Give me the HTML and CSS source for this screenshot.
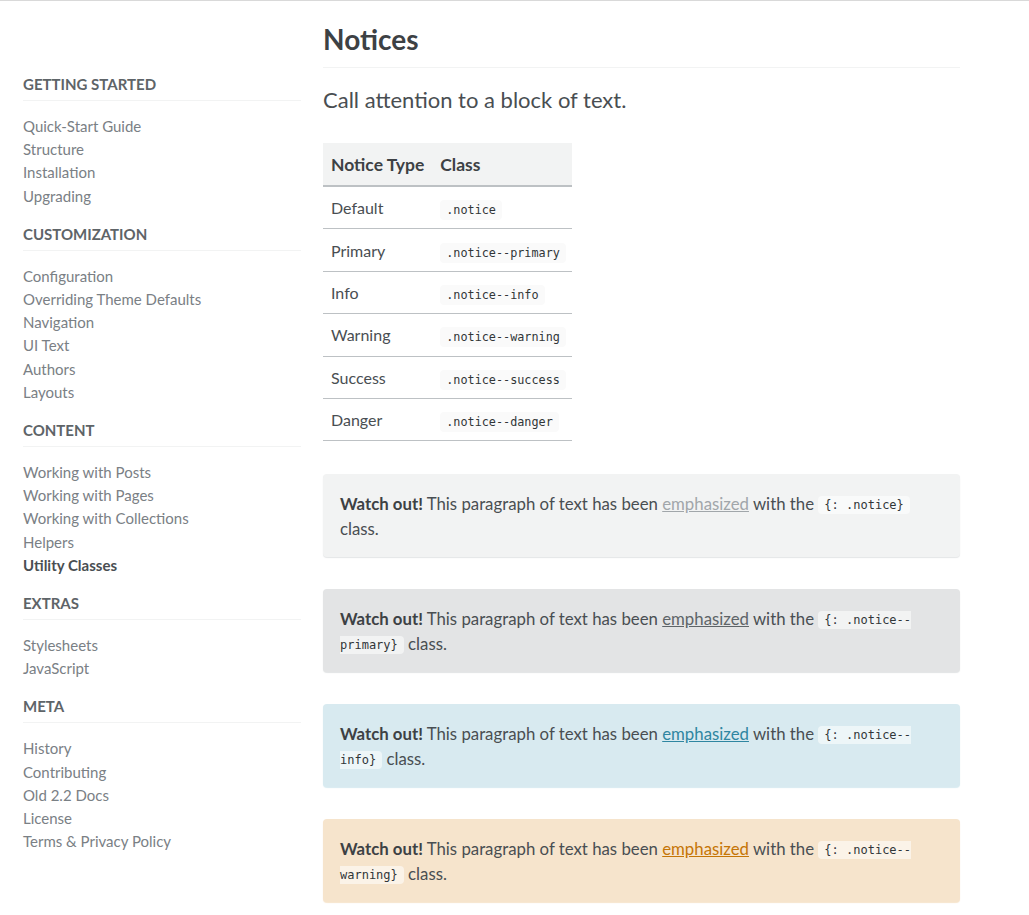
FILE: index.html
```html
<!DOCTYPE html>
<html lang="en">
<head>
<meta charset="utf-8">
<title>Notices</title>
<link rel="stylesheet" href="styles.css">
</head>
<body>
<div class="topline"></div>
<div class="layout">
  <nav class="sidebar">
    <h3 class="nav-title">Getting Started</h3>
    <ul class="nav-list">
      <li>Quick-Start Guide</li>
      <li>Structure</li>
      <li>Installation</li>
      <li>Upgrading</li>
    </ul>
    <h3 class="nav-title">Customization</h3>
    <ul class="nav-list">
      <li>Configuration</li>
      <li>Overriding Theme Defaults</li>
      <li>Navigation</li>
      <li>UI Text</li>
      <li>Authors</li>
      <li>Layouts</li>
    </ul>
    <h3 class="nav-title">Content</h3>
    <ul class="nav-list">
      <li>Working with Posts</li>
      <li>Working with Pages</li>
      <li>Working with Collections</li>
      <li>Helpers</li>
      <li class="active">Utility Classes</li>
    </ul>
    <h3 class="nav-title">Extras</h3>
    <ul class="nav-list">
      <li>Stylesheets</li>
      <li>JavaScript</li>
    </ul>
    <h3 class="nav-title">Meta</h3>
    <ul class="nav-list">
      <li>History</li>
      <li>Contributing</li>
      <li>Old 2.2 Docs</li>
      <li>License</li>
      <li>Terms &amp; Privacy Policy</li>
    </ul>
  </nav>
  <main class="content">
    <h1 class="title">Notices</h1>
    <p class="lead">Call attention to a block of text.</p>
    <table class="types">
      <thead>
        <tr><th>Notice Type</th><th>Class</th></tr>
      </thead>
      <tbody>
        <tr><td>Default</td><td><code>.notice</code></td></tr>
        <tr><td>Primary</td><td><code>.notice--primary</code></td></tr>
        <tr><td>Info</td><td><code>.notice--info</code></td></tr>
        <tr><td>Warning</td><td><code>.notice--warning</code></td></tr>
        <tr><td>Success</td><td><code>.notice--success</code></td></tr>
        <tr><td>Danger</td><td><code>.notice--danger</code></td></tr>
      </tbody>
    </table>
    <p class="notice notice-default"><strong>Watch out!</strong> This paragraph of text has been <a href="#">emphasized</a> with the <code>{: .notice}</code> class.</p>
    <p class="notice notice-primary"><strong>Watch out!</strong> This paragraph of text has been <a href="#">emphasized</a> with the <code>{: .notice--primary}</code> class.</p>
    <p class="notice notice-info"><strong>Watch out!</strong> This paragraph of text has been <a href="#">emphasized</a> with the <code>{: .notice--info}</code> class.</p>
    <p class="notice notice-warning"><strong>Watch out!</strong> This paragraph of text has been <a href="#">emphasized</a> with the <code>{: .notice--warning}</code> class.</p>
  </main>
</div>
</body>
</html>
```

FILE: styles.css
```css
html, body {
  margin: 0;
  padding: 0;
  background: #fff;
}
body {
  font-family: "Lato", "Open Sans", sans-serif;
  color: #494e52;
}
.topline {
  height: 1px;
  background: #d9d9d9;
}
.layout {
  display: flex;
  gap: 22px;
  padding-left: 23px;
}
.sidebar {
  width: 278px;
  flex: none;
  padding-top: 73px;
}
.nav-title {
  margin: 0;
  font-size: 15px;
  font-weight: 700;
  text-transform: uppercase;
  color: #5e6468;
  line-height: 20px;
  padding-bottom: 6px;
  border-bottom: 1px solid #f2f3f3;
}
.nav-list {
  list-style: none;
  margin: 14px 0 16px;
  padding: 0;
}
.nav-list li {
  font-size: 15px;
  line-height: 23.2px;
  color: #7a8085;
}
.nav-list li.active {
  font-weight: 700;
  color: #494e52;
}
.content {
  width: 637px;
  flex: none;
}
.title {
  margin: 20px 0 0;
  font-size: 28px;
  font-weight: 700;
  line-height: 36px;
  color: #3d4144;
  padding-bottom: 10px;
  border-bottom: 1px solid #f2f3f3;
}
.lead {
  margin: 18px 0 0;
  font-size: 22px;
  line-height: 28px;
  color: #494e52;
}
.types {
  margin: 29px 0 33px;
  border-collapse: collapse;
  font-size: 16px;
  color: #494e52;
}
.types th {
  background: #f2f3f3;
  text-align: left;
  font-size: 17.5px;
  font-weight: 700;
  color: #3d4144;
  padding: 0 8px;
  height: 42px;
  border-bottom: 2px solid #bdc1c4;
}
.types td {
  padding: 0 8px 0 8px;
  height: 41.4px;
  border-bottom: 1px solid #bdc1c4;
}
.types td:last-child {
  padding-right: 6px;
}
code {
  font-family: "DejaVu Sans Mono", "Liberation Mono", monospace;
  font-size: 11.8px;
  line-height: 1;
  background: #fafafa;
  border-radius: 4px;
  padding: 3px 6px;
  color: #313638;
}
.notice {
  margin: 0 0 32px;
  padding: 16.5px 17px;
  font-size: 16.8px;
  line-height: 25px;
  border-radius: 4px;
  color: #494e52;
}
.notice strong {
  color: #3d4144;
}
.notice code {
  font-size: 12px;
  padding: 2px 6px;
  vertical-align: 1px;
  background: rgba(255, 255, 255, 0.55);
}
.notice a {
  text-decoration: underline;
}
.notice-default {
  background: #f2f3f3;
  box-shadow: 0 1px 1px rgba(122, 130, 136, 0.2);
}
.notice-default a {
  color: #a1a6aa;
}
.notice-primary {
  background: #e3e4e5;
  box-shadow: 0 1px 1px rgba(111, 119, 125, 0.2);
}
.notice-primary a {
  color: #5e6468;
}
.notice-info {
  background: #d8eaf0;
  box-shadow: 0 1px 1px rgba(59, 156, 186, 0.2);
}
.notice-info a {
  color: #2f86a1;
}
.notice-warning {
  background: #f6e4cc;
  box-shadow: 0 1px 1px rgba(214, 127, 5, 0.2);
}
.notice-warning a {
  color: #c57506;
}
```
